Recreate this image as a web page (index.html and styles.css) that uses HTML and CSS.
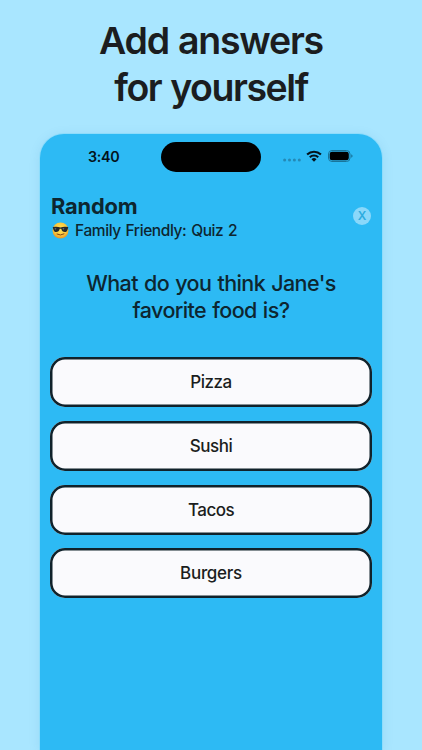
FILE: index.html
```
<!DOCTYPE html>
<html lang="en">
<head>
<meta charset="utf-8">
<title>Add answers for yourself</title>
<link rel="stylesheet" href="styles.css">
</head>
<body>
<h1 class="headline"><span class="headline-top">Add answers</span><br><span class="headline-bottom">for yourself</span></h1>
<main class="phone">
  <div class="status">
    <span class="time">3:40</span>
    <div class="island"></div>
    <div class="indicators">
      <svg class="dots" width="18" height="4" viewBox="0 0 18 4"><circle cx="1.6" cy="2" r="1.5"/><circle cx="6.5" cy="2" r="1.5"/><circle cx="11.4" cy="2" r="1.5"/><circle cx="16.3" cy="2" r="1.5"/></svg>
      <svg class="wifi" width="16" height="12" viewBox="0 0 16 12"><g fill="none" stroke="#04131b" stroke-width="2.1"><path d="M1.1 4.5a9.9 9.9 0 0 1 13.8 0"/><path d="M3.8 7.2a6 6 0 0 1 8.4 0"/></g><path d="M5.5 9.2a3.6 3.6 0 0 1 5 0L8 11.7z" fill="#04131b"/></svg>
      <svg class="battery" width="25" height="12" viewBox="0 0 25 12"><rect x=".5" y=".5" width="21.5" height="11" rx="3.5" fill="none" stroke="#19759b"/><rect x="1.7" y="1.7" width="19.1" height="8.6" rx="2.4" fill="#000"/><path d="M23.2 4.2q1.4.5 1.4 1.8t-1.4 1.8z" fill="#19759b"/></svg>
    </div>
  </div>
  <header class="top">
    <div>
      <h2 class="name">Random</h2>
      <div class="quiz">
        <svg class="emoji" width="17" height="17" viewBox="0 0 17 17"><defs><radialGradient id="face" cx=".5" cy=".4" r=".6"><stop offset="0" stop-color="#ffe45c"/><stop offset=".65" stop-color="#fac93c"/><stop offset="1" stop-color="#e79424"/></radialGradient></defs><circle cx="8.5" cy="8.5" r="8" fill="url(#face)"/><path d="M.7 5.1q4-1 7.8.4 3.8-1.4 7.8-.4l-.4 1.3q-.7 3.6-3.1 3.6-2.8 0-3.5-3.3H7.7q-.7 3.3-3.5 3.3-2.4 0-3.1-3.6z" fill="#25282a"/><path d="M2.5 6.3l2-.2-1.3 2zM10.5 6.3l2-.2-1.3 2z" fill="#697071"/><path d="M5 12.1q3.5 2 7-.2" fill="none" stroke="#844216" stroke-width="1" stroke-linecap="round"/></svg>
        <span>Family Friendly: Quiz 2</span>
      </div>
    </div>
    <button class="close" aria-label="Close">X</button>
  </header>
  <p class="question"><span class="question-top">What do you think Jane's</span><br><span class="question-bottom">favorite food is?</span></p>
  <div class="answers">
    <button class="answer">Pizza</button>
    <button class="answer">Sushi</button>
    <button class="answer">Tacos</button>
    <button class="answer wide">Burgers</button>
  </div>
</main>
</body>
</html>
```
FILE: styles.css
```
* { box-sizing: border-box; }
body {
  margin: 0;
  height: 750px;
  overflow: hidden;
  background: #a9e6ff;
  color: #1b1d20;
  font-family: Inter, "Liberation Sans", sans-serif;
}
h1, h2, p { margin: 0; }
button { font-family: inherit; color: inherit; padding: 0; }
.headline {
  height: 134px;
  padding-top: 17px;
  text-align: center;
  font-size: 37.5px;
  line-height: 47px;
  font-weight: 600;
  word-spacing: 1px;
}
.headline-top { letter-spacing: -1.25px; }
.headline-bottom { letter-spacing: -1.45px; }
.phone {
  width: 342px;
  height: 616px;
  margin: 0 auto;
  padding: 0 10px;
  border-radius: 24px 24px 0 0;
  background: #2dbaf4;
  box-shadow: 0 0 0 1px #8edcfb, 0 2px 12px rgba(40, 130, 180, .14);
  color: #0d2630;
}
.status {
  display: grid;
  grid-template-columns: 111px 100px 111px;
  height: 46px;
  align-items: center;
}
.time {
  padding: 0 0 2px 38px;
  font-size: 14.3px;
  font-weight: 600;
  letter-spacing: -.35px;
  color: #04131b;
}
.island { height: 30px; border-radius: 15px; background: #000; }
.indicators { display: flex; align-items: center; padding: 0 0 2px 22px; }
.dots { fill: #2489b5; margin-top: 8px; }
.wifi { margin-left: 5px; }
.battery { margin-left: 6px; }
.top { display: flex; justify-content: space-between; height: 65px; padding: 12px 1px 0 1px; }
.name { font-size: 21.8px; line-height: 28px; font-weight: 700; letter-spacing: -.15px; }
.quiz { display: flex; align-items: center; gap: 6px; height: 20px; padding-left: 1px; font-size: 15.5px; font-weight: 500; letter-spacing: -.4px; word-spacing: 1px; }
.close { width: 18px; height: 18px; margin-top: 15px; border: 0; border-radius: 50%; background: #8ad8fa; color: #2dacdf; font-size: 12px; font-weight: 600; line-height: 18px; }
.question { height: 112px; padding-top: 25px; text-align: center; font-size: 21.5px; line-height: 27px; font-weight: 500; letter-spacing: -.6px; word-spacing: 1px; }
.answers { display: flex; flex-direction: column; gap: 13.8px; }
.answer { height: 50px; border: 0; border-radius: 15px; background: #fafafd; box-shadow: inset 0 0 0 2.5px #10222b; color: #1b1d20; font-size: 17px; font-weight: 500; letter-spacing: -.5px; }
.wide { letter-spacing: -.3px; }
```
